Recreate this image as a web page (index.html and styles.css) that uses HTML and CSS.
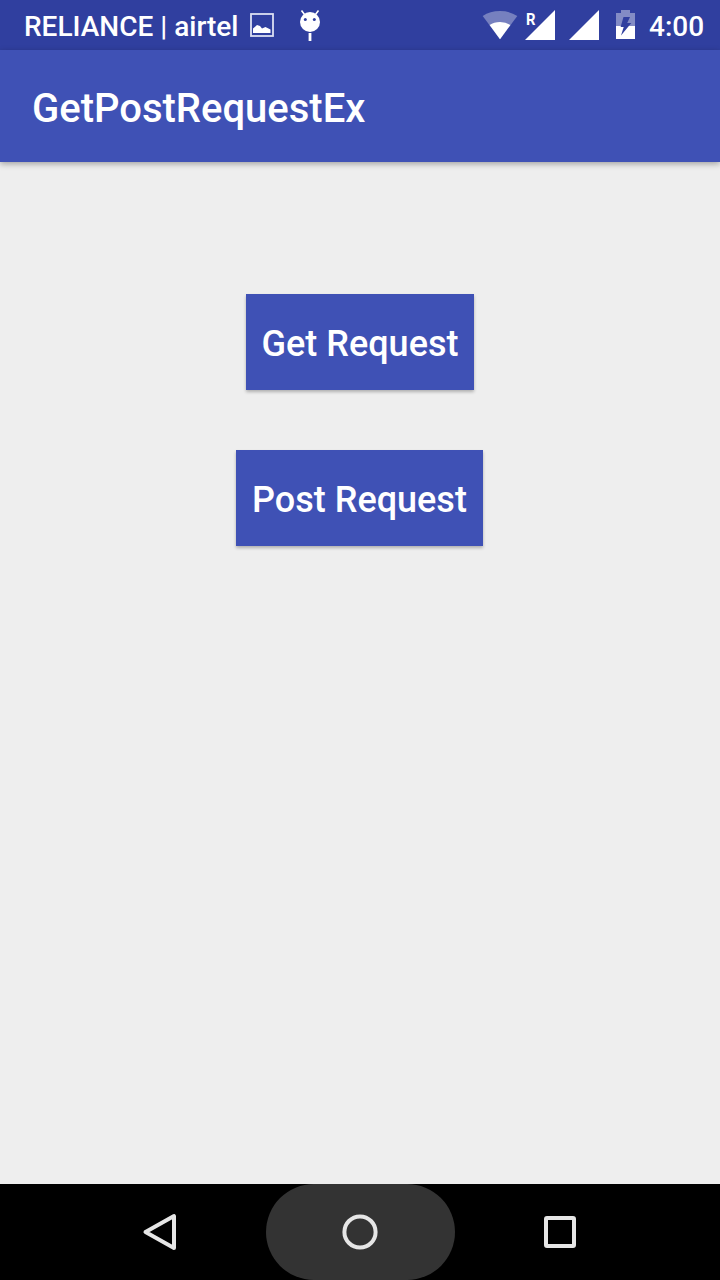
FILE: index.html
```html
<!DOCTYPE html>
<html lang="en">
<head>
  <meta charset="UTF-8">
  <meta name="viewport" content="width=device-width, initial-scale=1.0">
  <title>GetPostRequestEx</title>
  <link rel="stylesheet" href="styles.css">
</head>
<body>
  <div class="screen">
    <div class="status-bar">
      <div class="notifications">
        <span class="carrier">RELIANCE | airtel</span>
        <svg class="icon-picture" width="24" height="50" viewBox="0 0 24 50">
          <rect x="1" y="14" width="22" height="22" fill="none" stroke="#dcdff2" stroke-width="1.8"/>
          <path d="M3 33V28.5L7 25L10 26L12 28.5L15.5 27L20.5 29.5V33Z" fill="#fff"/>
        </svg>
        <svg class="icon-android" width="22" height="50" viewBox="0 0 22 50">
          <path d="M2.5 10.5L5.5 14.5M19.5 10.5L16.5 14.5" stroke="#fff" stroke-width="1.6"/>
          <ellipse cx="11" cy="22" rx="10" ry="10" fill="#fff"/>
          <circle cx="6.3" cy="19.5" r="1.5" fill="#303f9f"/>
          <circle cx="15.3" cy="19.5" r="1.5" fill="#303f9f"/>
          <path d="M11 33V41" stroke="#fff" stroke-width="2.8"/>
        </svg>
      </div>
      <div class="system-icons">
        <svg width="36" height="50" viewBox="0 0 36 50">
          <path d="M18 39.3L0.7 16Q8 11 18 11T35.3 16Z" fill="#7680bf"/>
          <path d="M18 39.3L7.6 25Q12 22 18 22T28.4 25Z" fill="#fff"/>
        </svg>
        <svg class="icon-roaming" width="30" height="50" viewBox="0 0 30 50">
          <path d="M0 40L30 10V40Z" fill="#fff"/>
          <text class="roaming-label" x="1" y="24.6" textLength="9.5" lengthAdjust="spacingAndGlyphs">R</text>
        </svg>
        <svg class="icon-signal" width="30" height="50" viewBox="0 0 30 50">
          <path d="M0 40L30 10V40Z" fill="#fff"/>
        </svg>
        <svg class="icon-battery" width="19" height="50" viewBox="0 0 19 50">
          <path d="M0 13H5V10H14V13H19V26H0Z" fill="#838cc5"/>
          <path d="M0 26H19V39H0Z" fill="#fff"/>
          <path d="M7.5 17H14L11.2 23H15.3L5 35.5L7.7 27H4.6Z" fill="#303f9f"/>
        </svg>
        <span class="clock">4:00</span>
      </div>
    </div>

    <header class="app-bar">
      <h1>GetPostRequestEx</h1>
    </header>

    <main class="content">
      <button type="button">Get Request</button>
      <button type="button" class="post">Post Request</button>
    </main>

    <nav class="nav-bar">
      <div class="nav-item">
        <svg width="40" height="40" viewBox="0 0 40 40">
          <path d="M5.5 20L34 4.1V35.9Z"/>
        </svg>
      </div>
      <div class="nav-item pressed">
        <svg width="40" height="40" viewBox="0 0 40 40">
          <circle cx="20" cy="20" r="15.6"/>
        </svg>
      </div>
      <div class="nav-item">
        <svg width="40" height="40" viewBox="0 0 40 40">
          <rect x="6" y="6" width="28" height="28" rx="1"/>
        </svg>
      </div>
    </nav>
  </div>
</body>
</html>
```
FILE: styles.css
```css
body {
  margin: 0;
  font-family: Roboto, sans-serif;
  font-weight: 500;
  background-color: #EEEEEE;
}
.screen {
  display: flex;
  flex-direction: column;
  width: 720px;
  height: 1280px;
  overflow: hidden;
}
.status-bar {
  display: flex;
  justify-content: space-between;
  height: 50px;
  padding: 0 16px 0 24px;
  background-color: #303F9F;
  color: #FFF;
  font-size: 28px;
  line-height: 53px;
}
.notifications,
.system-icons {
  display: flex;
  white-space: nowrap;
}
.status-bar svg {
  flex: none;
}
.carrier {
  width: 214px;
}
.icon-picture {
  margin-left: 12px;
}
.icon-android {
  margin-left: 25px;
}
.icon-roaming {
  margin-left: 7px;
}
.roaming-label {
  fill: #FFF;
  font-size: 17px;
  font-weight: 700;
}
.icon-signal {
  margin-left: 14px;
}
.icon-battery {
  margin-left: 17px;
}
.clock {
  width: 55px;
  margin-left: 14px;
}
.app-bar {
  display: flex;
  align-items: center;
  height: 112px;
  padding: 0 32px;
  background-color: #3F51B5;
  box-shadow: 0 2px 6px rgba(0, 0, 0, 0.32);
}
h1 {
  margin: 0;
  padding-top: 5px;
  color: #FFF;
  font-size: 40px;
  font-weight: 500;
}
.content {
  display: flex;
  flex: 1;
  flex-direction: column;
  align-items: center;
  gap: 60px;
  padding-top: 132px;
}
button {
  width: 228px;
  height: 96px;
  padding: 4px 0 0;
  border: none;
  background-color: #3F51B5;
  box-shadow: 0 2px 3px rgba(0, 0, 0, 0.26);
  color: #FFF;
  font-family: inherit;
  font-size: 36px;
  font-weight: 500;
  white-space: nowrap;
}
.post {
  width: 247px;
  margin-right: 1px;
}
.nav-bar {
  display: flex;
  justify-content: center;
  gap: 11px;
  height: 96px;
  background-color: #000;
}
.nav-item {
  display: flex;
  justify-content: center;
  align-items: center;
  width: 189px;
}
.pressed {
  border-radius: 48px;
  background-color: #333;
}
.nav-item svg {
  fill: none;
  stroke: #E6E6E6;
  stroke-width: 4;
  stroke-linejoin: round;
}
```
